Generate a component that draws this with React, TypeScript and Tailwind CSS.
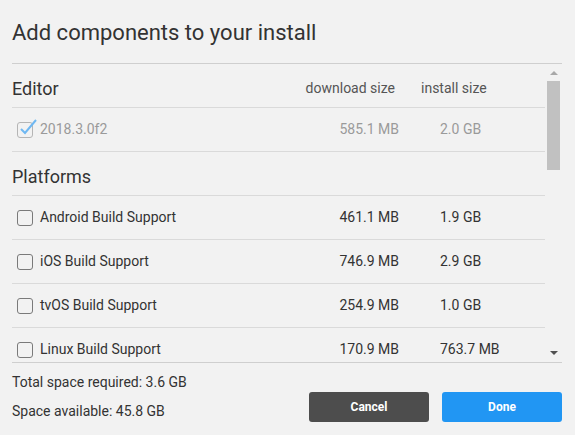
import React from 'react';

type Item = { name: string; download: string; install: string };

const platforms: Item[] = [
  { name: 'Android Build Support', download: '461.1 MB', install: '1.9 GB' },
  { name: 'iOS Build Support', download: '746.9 MB', install: '2.9 GB' },
  { name: 'tvOS Build Support', download: '254.9 MB', install: '1.0 GB' },
  { name: 'Linux Build Support', download: '170.9 MB', install: '763.7 MB' },
];

const SectionHeader = ({ title, showCols }: { title: string; showCols?: boolean }) => (
  <div className="flex h-[44px] shrink-0 items-center border-b border-[#dadada] pt-[5px]">
    <div className="flex-1 text-[18px] text-[#333]">{title}</div>
    {showCols && (
      <>
        <div className="w-[100px] pr-[4px] text-right text-[14px] text-[#555]">download size</div>
        <div className="w-[146px] pl-[22px] text-[14px] text-[#555]">install size</div>
      </>
    )}
  </div>
);

const Row = ({ item }: { item: Item }) => (
  <div className="flex h-[44px] shrink-0 items-center border-b border-[#dadada] text-[14px] text-[#333]">
    <div className="flex flex-1 items-center">
      <div className="ml-[5px] mr-[7px] h-[16px] w-[16px] rounded-[3px] border border-[#7a7a7a]" />
      <span>{item.name}</span>
    </div>
    <div className="w-[100px] text-right">{item.download}</div>
    <div className="w-[146px] pl-[41px]">{item.install}</div>
  </div>
);

export default function App() {
  return (
    <div
      className="flex h-[435px] w-[575px] flex-col overflow-hidden bg-[#f2f2f2] pl-[12px] pr-[13px]"
      style={{ fontFamily: 'Roboto, "Liberation Sans", sans-serif' }}
    >
      {/* Title */}
      <div className="pt-[18px] pb-[15px] text-[22px] leading-[30px] text-[#333]">
        Add components to your install
      </div>

      {/* List */}
      <div className="flex h-[300px] border-y border-[#cfcfcf]">
        <div className="flex w-[533px] flex-col overflow-hidden">
          <SectionHeader title="Editor" showCols />
          <div className="flex h-[44px] shrink-0 items-center border-b border-[#dadada] text-[14px] text-[#9a9a9a]">
            <div className="flex flex-1 items-center">
              <div className="relative ml-[5px] mr-[7px] h-[16px] w-[16px] rounded-[3px] border border-[#b5b5b5]">
                <svg className="absolute -top-[5px] left-[1px]" width="19" height="19" viewBox="0 0 19 19">
                  <path d="M2 11 L6 15 L17 2" fill="none" stroke="#6fb8f2" strokeWidth="2" />
                </svg>
              </div>
              <span>2018.3.0f2</span>
            </div>
            <div className="w-[100px] text-right">585.1 MB</div>
            <div className="w-[146px] pl-[41px]">2.0 GB</div>
          </div>
          <SectionHeader title="Platforms" />
          {platforms.map(p => (
            <Row key={p.name} item={p} />
          ))}
        </div>

        {/* Scrollbar */}
        <div className="ml-[2px] flex w-[13px] flex-col">
          <div className="flex h-[17px] items-center justify-center">
            <div className="h-0 w-0 border-x-[4px] border-b-[4px] border-x-transparent border-b-[#a8a8a8]" />
          </div>
          <div className="h-[89px] bg-[#c1c1c1]" />
          <div className="flex-1" />
          <div className="flex h-[18px] items-center justify-center">
            <div className="h-0 w-0 border-x-[4px] border-t-[4px] border-x-transparent border-t-[#505050]" />
          </div>
        </div>
      </div>

      {/* Footer */}
      <div className="flex items-start justify-between">
        <div className="pt-[9px] text-[14px] text-[#333]">
          <div className="leading-[20px]">Total space required: 3.6 GB</div>
          <div className="mt-[9px] leading-[20px]">Space available: 45.8 GB</div>
        </div>
        <div className="mt-[29px] flex gap-[13px]">
          <button className="h-[30px] w-[120px] rounded-[3px] bg-[#4d4d4d] text-[12px] font-bold text-white">
            Cancel
          </button>
          <button className="h-[30px] w-[120px] rounded-[3px] bg-[#2196f3] text-[12px] font-bold text-white">
            Done
          </button>
        </div>
      </div>
    </div>
  );
}
